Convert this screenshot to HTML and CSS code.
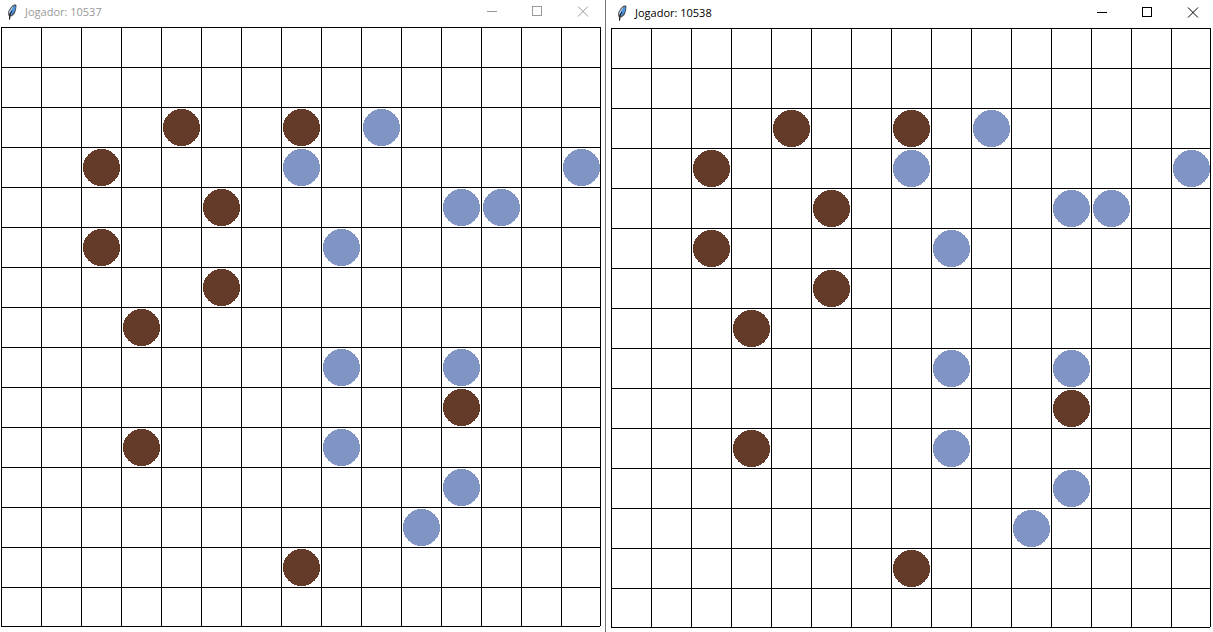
FILE: index.html
```html
<!DOCTYPE html>
<html lang="pt">
<head>
<meta charset="utf-8">
<title>Jogador</title>
<link rel="stylesheet" href="styles.css">
</head>
<body>
<svg class="defs" aria-hidden="true">
  <symbol id="feather" viewBox="0 0 10 16">
    <path d="M7.500 .5 9 .5 9.500 2 9 6 7.500 10 4.500 12.500 3.500 12 3 15.500 2 15.500 2.200 12.500 1.200 11 1.200 7.500 3.500 3.500 6 1Z" fill="#4a4f55"/>
    <path d="M7.800 1.500 8.700 3 8 6 6.500 8.700 4 11.400 3.200 9 5 5Z" fill="#4a94e6"/>
    <path d="M7 1.500 4.500 3.800 2.200 7.500 2 10 4.200 7Z" fill="#b4d0ec"/>
    <path d="M5 6.500 3 10.500 2.500 15.500" fill="none" stroke="#111" stroke-width=".9"/>
  </symbol>
</svg>
<main class="desktop">
  <section class="window window-inactive">
    <header class="titlebar">
      <svg class="app-icon" aria-hidden="true"><use href="#feather"/></svg>
      <h1 class="title">Jogador: 10537</h1>
      <button class="control" aria-label="Minimizar"><svg viewBox="0 0 10 11"><path d="M0 5.500H10"/></svg></button>
      <button class="control" aria-label="Maximizar"><svg viewBox="0 0 10 11"><path d="M.5 .5H9.500V9.500H.5Z"/></svg></button>
      <button class="control" aria-label="Fechar"><svg class="cross" viewBox="0 0 10 11"><path d="M0 .5 10 10.500M10 .5 0 10.500"/></svg></button>
    </header>
    <svg class="board" viewBox="0 0 600 600" role="img" aria-label="Tabuleiro do jogador 10537"></svg>
  </section>
  <section class="window window-active">
    <header class="titlebar">
      <svg class="app-icon" aria-hidden="true"><use href="#feather"/></svg>
      <h1 class="title">Jogador: 10538</h1>
      <button class="control" aria-label="Minimizar"><svg viewBox="0 0 10 11"><path d="M0 5.500H10"/></svg></button>
      <button class="control" aria-label="Maximizar"><svg viewBox="0 0 10 11"><path d="M.5 .5H9.500V9.500H.5Z"/></svg></button>
      <button class="control" aria-label="Fechar"><svg class="cross" viewBox="0 0 10 11"><path d="M0 .5 10 10.500M10 .5 0 10.500"/></svg></button>
    </header>
    <svg class="board" viewBox="0 0 600 600" role="img" aria-label="Tabuleiro do jogador 10538"></svg>
  </section>
</main>
<script src="board.js"></script>
</body>
</html>
```

FILE: styles.css
```css
* { box-sizing: border-box; }
body {
  margin: 0;
  background: #fff;
  font-family: "Open Sans", "Noto Sans", sans-serif;
}
.defs { position: absolute; width: 0; height: 0; }
.desktop {
  display: grid;
  grid-template-columns: 606fr 607fr;
  min-height: 100vh;
}
.window { min-width: 0; color: #000; }
.window-inactive {
  padding: 0 4px 0 1px;
  border-right: 1px solid #737373;
  color: #999;
}
.window-active { padding: 1px 2px 0 5px; }
.titlebar {
  display: flex;
  align-items: center;
  height: 27px;
  margin-right: -2px;
  padding: 0 0 4px 6px;
}
.app-icon { width: 10px; height: 16px; margin-right: 8px; flex: none; }
.title {
  flex: 1;
  margin: 0;
  font-size: 11px;
  line-height: 16px;
  font-weight: 400;
  white-space: nowrap;
}
.control {
  width: 41px;
  height: 23px;
  margin-left: 4px;
  padding: 0 0 0 15px;
  border: 0;
  background: none;
  color: inherit;
}
.control svg {
  display: block;
  width: 10px;
  height: 11px;
  overflow: visible;
  fill: none;
  stroke: currentColor;
  shape-rendering: crispEdges;
}
.control .cross { margin-left: 1px; shape-rendering: auto; }
.board {
  display: block;
  width: 100%;
  shape-rendering: crispEdges;
}
.line { stroke: #000; stroke-width: 1; }
.brown { fill: #643a28; }
.blue { fill: #8095c4; }
```

FILE: board.js
```js
const SIZE = 15;
const CELL = 40;
const pieces = {
  brown: [[4, 2], [7, 2], [2, 3], [5, 4], [2, 5], [5, 6], [3, 7], [11, 9], [3, 10], [7, 13]],
  blue: [[9, 2], [7, 3], [14, 3], [11, 4], [12, 4], [8, 5], [8, 8], [11, 8], [8, 10], [11, 11], [10, 12]]
};

function add(board, name, attrs) {
  const el = document.createElementNS("http://www.w3.org/2000/svg", name);
  for (const key in attrs) el.setAttribute(key, attrs[key]);
  board.appendChild(el);
}

for (const board of document.querySelectorAll(".board")) {
  const end = SIZE * CELL - 1;
  for (let i = 0; i <= SIZE; i++) {
    const p = Math.min(i * CELL, end) + 0.5;
    add(board, "line", { class: "line", x1: p, x2: p, y1: 0, y2: end });
    add(board, "line", { class: "line", x1: 0, x2: end, y1: p, y2: p });
  }
  for (const color in pieces) {
    for (const [col, row] of pieces[color]) {
      add(board, "circle", { class: color, cx: col * CELL + 20.5, cy: row * CELL + 20.5, r: 18.5 });
    }
  }
}
```
